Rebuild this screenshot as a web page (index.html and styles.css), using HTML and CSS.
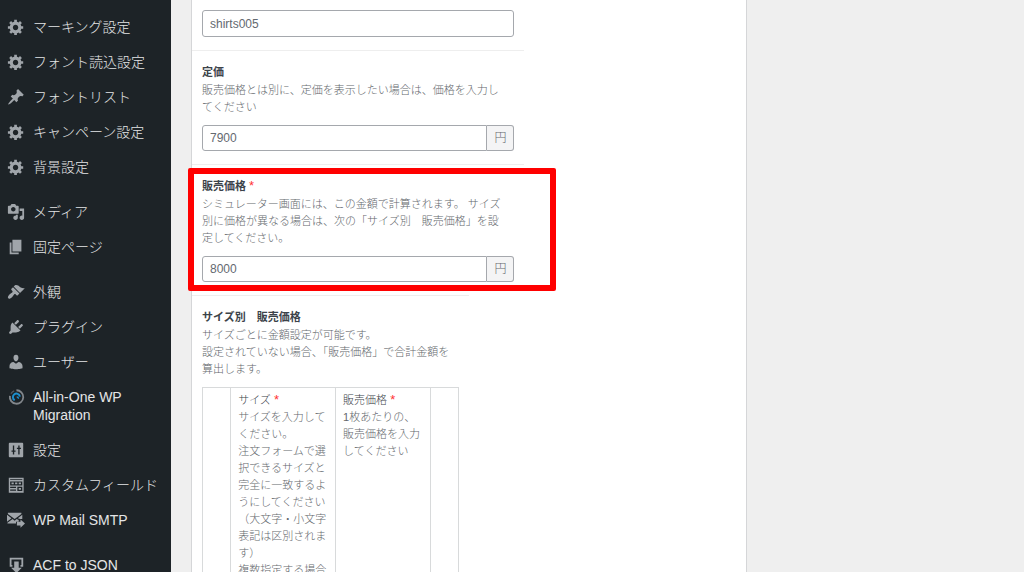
FILE: index.html
```html
<!DOCTYPE html>
<html lang="ja">
<head>
<meta charset="utf-8">
<meta name="viewport" content="width=device-width, initial-scale=1">
<title>商品設定</title>
<link rel="stylesheet" href="styles.css">
</head>
<body>
<svg class="sprite" aria-hidden="true">
  <symbol id="gear" viewBox="0 0 20 20"><path d="M18 12h-2.18c-.17.7-.44 1.35-.81 1.93l1.54 1.54-2.1 2.1-1.54-1.54c-.58.36-1.23.63-1.91.79V19H8v-2.18c-.68-.16-1.33-.43-1.91-.79l-1.54 1.54-2.12-2.12 1.54-1.54c-.36-.58-.63-1.23-.79-1.91H1V9.03h2.17c.16-.7.44-1.35.8-1.94L2.43 5.55l2.1-2.1 1.54 1.54c.58-.37 1.24-.64 1.93-.81V2h3v2.18c.68.16 1.33.43 1.91.79l1.54-1.54 2.12 2.12-1.54 1.54c.36.59.64 1.24.8 1.94H18V12zm-8.5 1.5c1.66 0 3-1.34 3-3s-1.34-3-3-3-3 1.34-3 3 1.34 3 3 3z"/></symbol>
  <symbol id="pin" viewBox="0 0 20 20"><path d="M10.44 3.02l1.82-1.82 6.36 6.35-1.83 1.82c-1.05-.68-2.48-.57-3.41.36l-.75.75c-.92.93-1.04 2.35-.35 3.41l-1.83 1.82-2.41-2.41-2.8 2.79c-.42.42-3.38 2.71-3.8 2.29s1.86-3.39 2.28-3.81l2.79-2.79L4.1 9.36l1.83-1.82c1.05.69 2.48.57 3.4-.36l.75-.75c.93-.92 1.05-2.35.36-3.41z"/></symbol>
  <symbol id="media" viewBox="0 0 20 20"><path d="M13 11V4c0-.55-.45-1-1-1h-1.67L9 1H5L3.67 3H2c-.55 0-1 .45-1 1v7c0 .55.45 1 1 1h10c.55 0 1-.45 1-1zM7 4.5c1.38 0 2.5 1.12 2.5 2.5S8.38 9.5 7 9.5 4.5 8.38 4.5 7 5.62 4.5 7 4.5zM14 6h5v10.5c0 1.38-1.12 2.5-2.5 2.5S14 17.88 14 16.5s1.12-2.5 2.5-2.5c.17 0 .34.02.5.05V9h-3V6zm-4 8.05V13h2v3.5c0 1.38-1.12 2.5-2.5 2.5S7 17.88 7 16.5 8.12 14 9.5 14c.17 0 .34.02.5.05z"/></symbol>
  <symbol id="pages" viewBox="0 0 20 20"><path d="M6 15V2h10v13H6zm-1 1h8v2H3V5h2v11z"/></symbol>
  <symbol id="brush" viewBox="0 0 20 20"><path d="M14.48 11.06L7.41 3.99l1.5-1.5c.5-.56 2.3-.47 3.51.32 1.21.8 1.43 1.28 2.91 2.1 1.18.64 2.45 1.26 4.45.85zm-.71.71L6.7 4.7 4.93 6.47c-.39.39-.39 1.02 0 1.41l1.06 1.06c.39.39.39 1.03 0 1.42-.6.6-1.43 1.11-2.21 1.69-.35.26-.7.53-1.01.84C1.43 14.23.4 16.08 1.4 17.07c.99 1 2.84-.03 4.18-1.36.31-.31.58-.66.85-1.02.57-.78 1.08-1.61 1.69-2.21.39-.39 1.02-.39 1.41 0l1.06 1.06c.39.39 1.02.39 1.41 0z"/></symbol>
  <symbol id="plug" viewBox="0 0 20 20"><path d="M13.11 4.36L9.87 7.6 8 5.73l3.24-3.24c.35-.34 1.05-.2 1.56.32.52.51.66 1.21.31 1.55zm-8 1.77l.91-1.12 9.01 9.01-1.19.84c-.71.71-2.63 1.16-3.82 1.16H6.14L4.9 17.26c-.59.59-1.54.59-2.12 0-.59-.58-.59-1.53 0-2.12l1.24-1.24v-3.88c0-1.13.4-3.19 1.09-3.89zm7.26 3.97l3.24-3.24c.34-.35 1.04-.21 1.55.31.52.51.66 1.21.31 1.55l-3.24 3.25z"/></symbol>
  <symbol id="user" viewBox="0 0 20 20"><path d="M10 9.25c-2.27 0-2.73-3.44-2.73-3.44C7 4.02 7.82 2 9.97 2c2.16 0 2.98 2.02 2.71 3.81 0 0-.41 3.44-2.68 3.44zm0 2.57L12.72 10c2.39 0 4.52 2.33 4.52 4.53v2.49s-3.65 1.13-7.24 1.13c-3.65 0-7.24-1.13-7.24-1.13v-2.49c0-2.25 1.94-4.48 4.47-4.48z"/></symbol>
  <symbol id="migration" viewBox="0 0 20 20"><g fill="none"><path d="M10.500 2.500A7.500 7.500 0 1 1 3.200 8.800" stroke="#82878c" stroke-width="2"/><path d="M8 3.300A7.500 7.500 0 0 0 4.400 6.200" stroke="#50575e" stroke-width="1.500"/><path d="M8.600 13.600A3.900 3.900 0 1 1 14.300 9.500" stroke="#1c8fce" stroke-width="2.200"/><path d="M12.800 12a2 2 0 0 0-2-2" stroke="#1c8fce" stroke-width="1.500"/></g></symbol>
  <symbol id="sliders" viewBox="0 0 20 20"><path fill-rule="evenodd" d="M3 2h14a1 1 0 0 1 1 1v14a1 1 0 0 1-1 1H3a1 1 0 0 1-1-1V3a1 1 0 0 1 1-1zM6.500 5v5.500H5v1.500h1.500v3H8v-3h1.500v-1.500H8V5zM12.500 5v2.500H11V9h1.500v6H14V9h1.500V7.500H14V5z"/></symbol>
  <symbol id="fields" viewBox="0 0 20 20"><path fill-rule="evenodd" d="M2 2h16.500v16.500H2zM3.500 3.500v1h13.500v-1zM3.500 6v4.500h13.500V6zM5 7.200h2.500v2H5zM9 7.200h2.500v2H9zM13 7.200h2.500v2H13zM3.500 12v1.300h6.500V12zM3.500 15v1.300h6.500V15zM11.500 12v4.800h5.500V12zM13 13.300h2.500v2H13z"/></symbol>
  <symbol id="mail" viewBox="0 0 20 20"><path d="M1 2h15v1.200L8.500 9 1 3.200zM0 4.300L5 8.100 0 12zM17 4.300V9h-2.500L12 8.100zM6.200 9l2.300 1.800L10.800 9l2.200 1v2H10v2H.500v-1z"/><path d="M11 12h4V9.500l5 4.500-5 4.500V16h-4z"/></symbol>
  <symbol id="download" viewBox="0 0 20 20"><path d="M3 2h15v10h-3v-2h1V4H5v6h1v2H3z"/><path d="M8 6h5v7h3.500l-6 6-6-6H8z"/></symbol>
</svg>
<div class="layout">
  <nav class="sidebar" aria-label="管理メニュー">
    <ul class="menu">
      <li><a class="item" href="#"><svg class="icon"><use href="#gear"/></svg><span>マーキング設定</span></a></li>
      <li><a class="item" href="#"><svg class="icon"><use href="#gear"/></svg><span>フォント読込設定</span></a></li>
      <li><a class="item" href="#"><svg class="icon"><use href="#pin"/></svg><span>フォントリスト</span></a></li>
      <li><a class="item" href="#"><svg class="icon"><use href="#gear"/></svg><span>キャンペーン設定</span></a></li>
      <li><a class="item" href="#"><svg class="icon"><use href="#gear"/></svg><span>背景設定</span></a></li>
    </ul>
    <ul class="menu">
      <li><a class="item" href="#"><svg class="icon"><use href="#media"/></svg><span>メディア</span></a></li>
      <li><a class="item" href="#"><svg class="icon"><use href="#pages"/></svg><span>固定ページ</span></a></li>
    </ul>
    <ul class="menu">
      <li><a class="item" href="#"><svg class="icon"><use href="#brush"/></svg><span>外観</span></a></li>
      <li><a class="item" href="#"><svg class="icon"><use href="#plug"/></svg><span>プラグイン</span></a></li>
      <li><a class="item" href="#"><svg class="icon"><use href="#user"/></svg><span>ユーザー</span></a></li>
      <li><a class="item" href="#"><svg class="icon"><use href="#migration"/></svg><span>All-in-One WP<br>Migration</span></a></li>
      <li><a class="item" href="#"><svg class="icon"><use href="#sliders"/></svg><span>設定</span></a></li>
      <li><a class="item" href="#"><svg class="icon"><use href="#fields"/></svg><span>カスタムフィールド</span></a></li>
      <li><a class="item" href="#"><svg class="icon"><use href="#mail"/></svg><span>WP Mail SMTP</span></a></li>
    </ul>
    <ul class="menu">
      <li><a class="item" href="#"><svg class="icon"><use href="#download"/></svg><span>ACF to JSON</span></a></li>
    </ul>
  </nav>
  <main class="content">
    <form class="panel">
      <div class="field first">
        <input class="text" type="text" value="shirts005" aria-label="商品コード">
      </div>
      <div class="field">
        <label class="label" for="list-price">定価</label>
        <p class="desc">販売価格とは別に、定価を表示したい場合は、価格を入力し<br>てください</p>
        <div class="group">
          <input class="text" id="list-price" type="text" value="7900">
          <span class="unit">円</span>
        </div>
      </div>
      <div class="field marked">
        <label class="label" for="sale-price">販売価格 <span class="required">*</span></label>
        <p class="desc">シミュレーター画面には、この金額で計算されます。 サイズ<br>別に価格が異なる場合は、次の「サイズ別　販売価格」を設<br>定してください。</p>
        <div class="group">
          <input class="text" id="sale-price" type="text" value="8000">
          <span class="unit">円</span>
        </div>
      </div>
      <div class="field half">
        <div class="label" id="by-size">サイズ別　販売価格</div>
        <p class="desc">サイズごとに金額設定が可能です。<br>設定されていない場合、<span class="tight">「</span>販売価格」で合計金額を<br>算出します。</p>
        <table class="repeater" aria-labelledby="by-size">
          <thead>
            <tr>
              <th class="handle"></th>
              <th class="size"><span class="name">サイズ <span class="required">*</span></span><br>サイズを入力して<br>ください。<br>注文フォームで選<br>択できるサイズと<br>完全に一致するよ<br>うにしてください<br>（大文字・小文字<br>表記は区別されま<br>す）<br>複数指定する場合</th>
              <th class="price"><span class="name">販売価格 <span class="required">*</span></span><br>1枚あたりの、<br>販売価格を入力<br>してください</th>
              <th class="handle"></th>
            </tr>
          </thead>
        </table>
      </div>
    </form>
  </main>
</div>
</body>
</html>
```
FILE: styles.css
```css
* { box-sizing: border-box; }

body {
  margin: 0;
  height: 100vh;
  overflow: hidden;
  background: #efefef;
  color: #3c434a;
  font-family: "Liberation Sans", "Noto Sans CJK JP", sans-serif;
  font-size: 11px;
  line-height: 17px;
}

.sprite { display: none; }

.layout {
  display: flex;
  min-height: 100vh;
}

.sidebar {
  flex: 0 0 171px;
  padding-top: 9px;
  background: #1d2327;
}

.menu {
  margin: 0 0 10px;
  padding: 0;
  list-style: none;
}

.item {
  display: flex;
  gap: 8px;
  padding: 9px 8px 8px 7px;
  color: #e4e5e6;
  font-size: 14px;
  font-weight: 300;
  line-height: 18px;
  text-decoration: none;
  white-space: nowrap;
}

.icon {
  flex: none;
  width: 18px;
  height: 18px;
  fill: #a0a5aa;
}

.content {
  flex: 1;
  padding: 0 277px 0 20px;
}

.panel {
  min-height: 100%;
  border: 1px solid #d5d6d8;
  border-width: 0 1px;
  background: #fff;
}

.field {
  position: relative;
  width: 60%;
  padding: 13px 10px;
  border-top: 1px solid #eee;
}

.field.first {
  padding-top: 10px;
  border-top: 0;
}

.field.half { width: 50%; }

.marked::after {
  content: "";
  position: absolute;
  inset: 3px -32px 4px -4px;
  border: 6px solid #f00;
  border-radius: 2px;
  pointer-events: none;
}

.label {
  display: block;
  height: 16px;
  font-weight: 700;
  line-height: 16px;
}

.required {
  color: #f33;
  font-size: 13px;
  font-weight: 400;
  line-height: 1;
}

.desc {
  margin: 2px 0 9px;
  color: #64686d;
  font-weight: 300;
  white-space: nowrap;
}

.tight { font-feature-settings: "halt"; }

.text {
  display: block;
  width: 100%;
  height: 27px;
  padding: 0 7px;
  border: 1px solid #a5a8ad;
  border-radius: 3px;
  background: #fff;
  color: #646970;
  font: 300 12px/25px "Liberation Sans", "Noto Sans CJK JP", sans-serif;
}

.group { display: flex; }

.group .text {
  flex: 1;
  height: 26px;
  min-width: 0;
  border-radius: 3px 0 0 3px;
}

.unit {
  width: 27px;
  border: 1px solid #a5a8ad;
  border-left: 0;
  border-radius: 0 3px 3px 0;
  background: #f4f4f5;
  color: #64686d;
  font-size: 12px;
  font-weight: 300;
  line-height: 24px;
  text-align: center;
}

.repeater {
  width: 100%;
  border-collapse: collapse;
  table-layout: fixed;
}

.repeater th {
  padding: 4px 7px;
  border: 1px solid #d8dadb;
  color: #64686d;
  font-weight: 300;
  text-align: left;
  vertical-align: top;
  white-space: nowrap;
}

.repeater .handle { width: 11%; }
.repeater .size { width: 41%; }

.name { color: #3c434a; }
```
